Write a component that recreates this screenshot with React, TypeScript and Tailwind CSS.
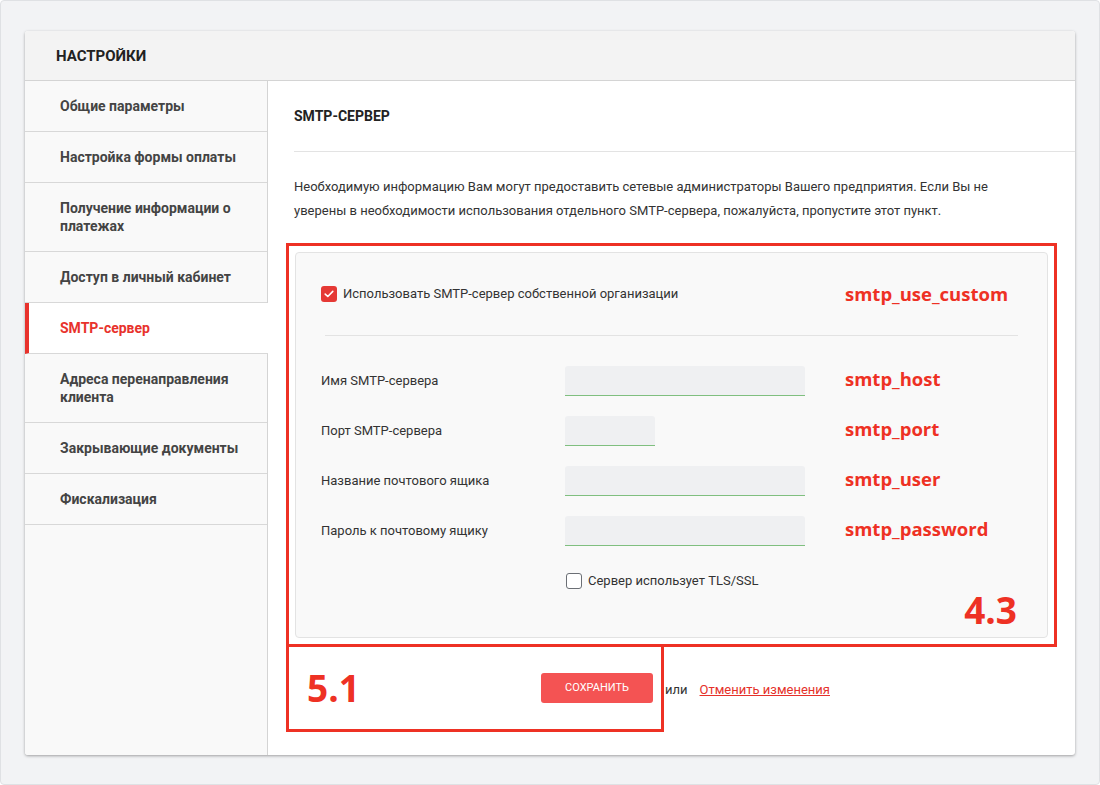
import React from "react";

const menu = [
  "Общие параметры",
  "Настройка формы оплаты",
  "Получение информации о платежах",
  "Доступ в личный кабинет",
  "SMTP-сервер",
  "Адреса перенаправления клиента",
  "Закрывающие документы",
  "Фискализация",
];

const fields = [
  { label: "Имя SMTP-сервера", key: "smtp_host", short: false },
  { label: "Порт SMTP-сервера", key: "smtp_port", short: true },
  { label: "Название почтового ящика", key: "smtp_user", short: false },
  { label: "Пароль к почтовому ящику", key: "smtp_password", short: false },
];

const Note = ({ children, className = "" }: { children: React.ReactNode; className?: string }) => (
  <span className={`font-['Open_Sans',sans-serif] font-bold text-[#ee3124] ${className}`}>{children}</span>
);

const Check = ({ checked }: { checked: boolean }) =>
  checked ? (
    <span className="w-4 h-4 rounded-[3px] bg-[#e53935] flex items-center justify-center shrink-0">
      <svg width="10" height="8" viewBox="0 0 10 8" fill="none">
        <path d="M1.2 4.1 3.8 6.5 8.8 1.4" stroke="white" strokeWidth="1.6" strokeLinecap="round" strokeLinejoin="round" />
      </svg>
    </span>
  ) : (
    <span className="w-4 h-4 rounded-[3px] border border-[#6b6f75] bg-white shrink-0" />
  );

export default function App() {
  return (
    <div className="w-[1100px] h-[785px] bg-[#f2f3f5] border border-[#dfe1e4] rounded-[4px] font-['Roboto',sans-serif] text-[#333]">
      <div className="ml-[24px] mt-[30px] w-[1050px] h-[724px] bg-white rounded-[3px] shadow-[0_1px_3px_rgba(0,0,0,0.35)] flex flex-col overflow-hidden">
        <div className="h-[50px] shrink-0 bg-[#f3f3f3] border-b border-[#d4d4d4] flex items-center pl-[31px] pt-[2px] text-[15px] font-bold text-[#222]">
          НАСТРОЙКИ
        </div>

        <div className="flex flex-1">
          <div className="w-[243px] shrink-0 bg-[#f9f9f9] border-r border-[#d4d4d4]">
            {menu.map((item) => {
              const active = item === "SMTP-сервер";
              return (
                <div
                  key={item}
                  className={
                    active
                      ? "bg-white border-b border-[#d8d8d8] border-l-4 border-l-[#e8322c] -mr-px pl-[31px] pr-[20px] py-4 text-[14px] leading-[18px] font-bold text-[#e8322c]"
                      : "border-b border-[#d8d8d8] pl-[35px] pr-[20px] py-4 text-[14px] leading-[18px] font-bold text-[#444]"
                  }
                >
                  {item}
                </div>
              );
            })}
          </div>

          <div className="flex-1 pl-[26px]">
            <div className="h-[71px] border-b border-[#e3e3e3] flex items-center text-[14px] font-bold text-[#222]">
              SMTP-СЕРВЕР
            </div>
            <p className="mt-[23px] text-[13px] leading-[24px] text-[#333]">
              Необходимую информацию Вам могут предоставить сетевые администраторы Вашего предприятия. Если Вы не
              <br />
              уверены в необходимости использования отдельного SMTP-сервера, пожалуйста, пропустите этот пункт.
            </p>

            <div className="mt-[20px] -ml-[8px] w-[771px] border-[3px] border-[#ee3124] p-[6px]">
              <div className="relative h-[386px] bg-[#f9f9f9] border border-[#e3e3e3] rounded-[4px] pl-[25px] pr-[26px]">
                <div className="h-[82px] flex items-center">
                  <div className="w-[524px] flex items-center gap-[6px] text-[13px] text-[#333]">
                    <Check checked />
                    Использовать SMTP-сервер собственной организации
                  </div>
                  <Note className="text-[18.5px] leading-[24px] -mt-[1px]">smtp_use_custom</Note>
                </div>
                <div className="ml-[4px] mr-[3px] border-t border-[#e3e3e3]" />
                <div className="pt-[30px] flex flex-col gap-[20px]">
                  {fields.map((f) => (
                    <div key={f.key} className="flex items-center">
                      <div className="w-[244px] text-[13px] text-[#333]">{f.label}</div>
                      <div className="w-[280px]">
                        <div
                          className={`${f.short ? "w-[90px]" : "w-[240px]"} h-[30px] bg-[#eff0f2] rounded-t-[3px] border-b border-[#7fbf7f]`}
                        />
                      </div>
                      <Note className="text-[18.5px] leading-[24px] -mt-[4px]">{f.key}</Note>
                    </div>
                  ))}
                </div>
                <div className="mt-[25px] ml-[245px] flex items-center gap-[6px] text-[13px] text-[#333]">
                  <Check checked={false} />
                  Сервер использует TLS/SSL
                </div>
                <Note className="absolute right-[30px] bottom-[3px] text-[37px] leading-[48px]">4.3</Note>
              </div>
            </div>

            <div className="flex items-center">
              <div className="-ml-[8px] w-[378px] h-[85px] border-[3px] border-t-0 border-[#ee3124] flex items-center pl-[18px] pr-[8px]">
                <Note className="text-[37px] leading-[40px]">5.1</Note>
                <button className="ml-auto w-[112px] h-[30px] rounded-[3px] bg-[#f45353] text-white text-[11px] uppercase">
                  СОХРАНИТЬ
                </button>
              </div>
              <span className="ml-[1px] text-[13px] text-[#333]">или</span>
              <a href="#" className="ml-[12px] text-[13px] text-[#e5312a] underline">
                Отменить изменения
              </a>
            </div>
          </div>
        </div>
      </div>
    </div>
  );
}
